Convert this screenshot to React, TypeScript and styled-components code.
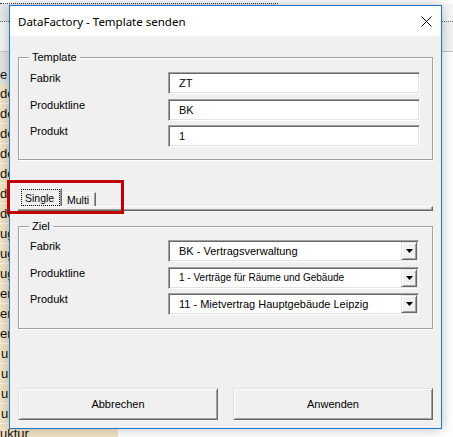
import React from "react";
import styled, { createGlobalStyle, css } from "styled-components";

const GlobalStyle = createGlobalStyle`
  html, body { margin: 0; padding: 0; background: #ffffff; }
  body { font-family: "Liberation Sans", Arial, sans-serif; overflow: hidden; }
  *, *::before, *::after { box-sizing: border-box; }
`;

const sunken = css`
  border: 1px solid;
  border-color: #a0a0a0 #ffffff #ffffff #a0a0a0;
  box-shadow: inset 1px 1px 0 #696969, inset -1px -1px 0 #e3e3e3;
`;

const raised = css`
  border: 1px solid;
  border-color: #e3e3e3 #696969 #696969 #e3e3e3;
  box-shadow: inset 1px 1px 0 #ffffff, inset -1px -1px 0 #a0a0a0;
`;

/* ---------- desktop / excel sheet behind ---------- */

const Desktop = styled.div`
  position: relative;
  width: 453px;
  height: 437px;
  overflow: hidden;
  background: #ffffff;
`;

const Sheet = styled.div`
  display: flex;
  flex-direction: column;
  width: 453px;
  height: 437px;
`;

const NameBoxStrip = styled.div`
  flex: none;
  height: 4px;
  width: 278px;
  border-bottom: 1px dotted #3a3a3a;
`;

const ToolStrip = styled.div`
  flex: none;
  height: 18px;
  background: linear-gradient(to right, #e8e8e8 0 278px, #f7f7f7 278px);
  border-bottom: 1px dotted #6a6a6a;
`;

const RibbonGap = styled.div`
  flex: none;
  height: 30px;
  background: #f4f4f4;
  border-bottom: 1px solid #c6c6c6;
`;

const SheetRow = styled.div<{ $tall?: boolean }>`
  flex: none;
  display: flex;
  height: ${(p) => (p.$tall ? 32 : 20)}px;
  background: #ffffff;
`;

const SheetCell = styled.div<{ $header?: boolean; $shift: number }>`
  width: 118px;
  overflow: hidden;
  white-space: nowrap;
  font-family: "Liberation Sans", Arial, sans-serif;
  font-size: 13px;
  color: #111;
  padding-left: ${(p) => p.$shift}px;
  ${(p) =>
    p.$header
      ? css`
          background: #e2e2e2;
          padding-top: 15px;
          line-height: 16px;
        `
      : css`
          background: #f2e4c5;
          border-bottom: 1px solid #fbf7ee;
          line-height: 19px;
        `}
`;

/* ---------- dialog window ---------- */

const Window = styled.div`
  position: absolute;
  left: 9px;
  top: 5px;
  width: 433px;
  height: 424px;
  border: 1px solid #1979ca;
  background: #f0f0f0;
  box-shadow: 0 0 12px rgba(0, 0, 0, 0.26);
  display: flex;
  flex-direction: column;
`;

const TitleBar = styled.div`
  flex: none;
  height: 30px;
  background: #ffffff;
  display: flex;
  align-items: center;
  justify-content: space-between;
  padding: 0 9px 0 8px;
`;

const Title = styled.span`
  font-family: "Noto Sans", "Open Sans", sans-serif;
  font-size: 11.5px;
  color: #000;
  padding-top: 1px;
`;

const CloseGlyph = styled.svg`
  display: block;
  width: 11px;
  height: 11px;
`;

const Body = styled.div`
  flex: 1;
  display: flex;
  flex-direction: column;
  padding: 15px 8px 8px 8px;
  font-family: "Liberation Sans", Arial, sans-serif;
  font-size: 11px;
  color: #000;
`;

const GroupBox = styled.fieldset<{ $pt: number; $pb: number }>`
  margin: 0;
  min-width: 0;
  padding: ${(p) => p.$pt}px 12px ${(p) => p.$pb}px 11px;
  border: 1px solid #a0a0a0;
  box-shadow: 1px 1px 0 #ffffff, inset 1px 1px 0 #ffffff;
`;

const Legend = styled.legend`
  margin-left: -1px;
  padding: 0 3px;
  font-size: 11px;
  line-height: 13px;
  background: #f0f0f0;
`;

const FieldGrid = styled.div`
  display: grid;
  grid-template-columns: 138px 252px;
  row-gap: 4.5px;
  align-items: start;
`;

const Label = styled.span`
  font-size: 11px;
  line-height: 13px;
`;

const TextBox = styled.div`
  ${sunken};
  height: 22px;
  background: #ffffff;
  display: flex;
  align-items: center;
  padding-left: 10px;
  font-size: 11px;
`;

const Combo = styled.div`
  ${sunken};
  height: 22px;
  width: 251px;
  background: #ffffff;
  display: flex;
  align-items: center;
  padding: 0 1px 0 10px;
`;

const ComboText = styled.span<{ $size: number }>`
  flex: 1;
  font-size: ${(p) => p.$size}px;
  white-space: nowrap;
  overflow: hidden;
`;

const DropButton = styled.span`
  ${raised};
  flex: none;
  width: 16px;
  height: 18px;
  background: #f0f0f0;
  display: flex;
  align-items: center;
  justify-content: center;
`;

const TabArea = styled.div`
  margin-top: 28px;
  display: flex;
  flex-direction: column;
`;

const TabRow = styled.div`
  display: flex;
  align-items: flex-end;
  height: 18px;
  padding-left: 2px;
`;

const Tab = styled.div<{ $active?: boolean; $w: number }>`
  width: ${(p) => p.$w}px;
  height: ${(p) => (p.$active ? 18 : 14)}px;
  border-top: 1px solid #ffffff;
  border-left: 1px solid #ffffff;
  border-right: 1px solid #696969;
  box-shadow: inset -1px 0 0 #a0a0a0;
  display: flex;
  align-items: stretch;
  font-size: 10.5px;
`;

const TabLabel = styled.span<{ $focus?: boolean }>`
  flex: 1;
  display: flex;
  align-items: center;
  padding-left: 3px;
  margin-right: 1px;
  border: 1px ${(p) => (p.$focus ? "dotted #000" : "solid transparent")};
`;

const TabBar = styled.div`
  height: 5px;
  border-top: 1px solid #ffffff;
  border-right: 1px solid #696969;
  border-bottom: 1px solid #696969;
  box-shadow: inset 0 -1px 0 #a0a0a0, inset -1px 0 0 #a0a0a0;
`;

const ZielWrap = styled.div`
  margin-top: 9px;
`;

const ButtonRow = styled.div`
  margin-top: auto;
  display: grid;
  grid-template-columns: 200px 200px;
  column-gap: 15px;
`;

const Button = styled.button`
  ${raised};
  height: 32px;
  background: #f0f0f0;
  font-family: "Liberation Sans", Arial, sans-serif;
  font-size: 11px;
  color: #000;
  padding: 0;
`;

const Annotation = styled.div`
  position: absolute;
  left: 7px;
  top: 180px;
  width: 117px;
  height: 34px;
  border: 3px solid #c00000;
`;

const sheetRows: { t: string; s: number }[] = [
  { t: "de", s: -1 },
  { t: "de", s: -1 },
  { t: "de", s: -1 },
  { t: "de", s: -1 },
  { t: "de", s: -1 },
  { t: "de", s: -1 },
  { t: "de", s: -1 },
  { t: "ug", s: -1 },
  { t: "ug", s: -1 },
  { t: "ug", s: -1 },
  { t: "er", s: -1 },
  { t: "er", s: -1 },
  { t: "er", s: -1 },
  { t: "u", s: 1 },
  { t: "u", s: 1 },
  { t: "u", s: 1 },
  { t: "u", s: 1 },
  { t: "uktur", s: 0 },
];

const Arrow = () => (
  <svg width="7" height="4" viewBox="0 0 7 4">
    <polygon points="0,0 7,0 3.5,4" fill="#000" />
  </svg>
);

export default function App() {
  return (
    <>
      <GlobalStyle />
      <Desktop>
        <Sheet>
          <NameBoxStrip />
          <ToolStrip />
          <RibbonGap />
          <SheetRow $tall>
            <SheetCell $header $shift={0}>
              e
            </SheetCell>
          </SheetRow>
          {sheetRows.map((r, i) => (
            <SheetRow key={i}>
              <SheetCell $shift={r.s}>{r.t}</SheetCell>
            </SheetRow>
          ))}
        </Sheet>

        <Window>
          <TitleBar>
            <Title>DataFactory - Template senden</Title>
            <CloseGlyph viewBox="0 0 11 11">
              <path d="M0.5 0.5 L10.5 10.5 M10.5 0.5 L0.5 10.5" stroke="#000" strokeWidth="1" />
            </CloseGlyph>
          </TitleBar>
          <Body>
            <GroupBox $pt={8} $pb={12}>
              <Legend>Template</Legend>
              <FieldGrid>
                <Label>Fabrik</Label>
                <TextBox>ZT</TextBox>
                <Label>Produktline</Label>
                <TextBox>BK</TextBox>
                <Label>Produkt</Label>
                <TextBox>1</TextBox>
              </FieldGrid>
            </GroupBox>

            <TabArea>
              <TabRow>
                <Tab $active $w={42}>
                  <TabLabel $focus>Single</TabLabel>
                </Tab>
                <Tab $w={34}>
                  <TabLabel>Multi</TabLabel>
                </Tab>
              </TabRow>
              <TabBar />
            </TabArea>

            <ZielWrap>
              <GroupBox $pt={7} $pb={13}>
                <Legend>Ziel</Legend>
                <FieldGrid>
                  <Label>Fabrik</Label>
                  <Combo>
                    <ComboText $size={11}>BK - Vertragsverwaltung</ComboText>
                    <DropButton>
                      <Arrow />
                    </DropButton>
                  </Combo>
                  <Label>Produktline</Label>
                  <Combo>
                    <ComboText $size={10}>1 - Verträge für Räume und Gebäude</ComboText>
                    <DropButton>
                      <Arrow />
                    </DropButton>
                  </Combo>
                  <Label>Produkt</Label>
                  <Combo>
                    <ComboText $size={11}>11 - Mietvertrag Hauptgebäude Leipzig</ComboText>
                    <DropButton>
                      <Arrow />
                    </DropButton>
                  </Combo>
                </FieldGrid>
              </GroupBox>
            </ZielWrap>

            <ButtonRow>
              <Button>Abbrechen</Button>
              <Button>Anwenden</Button>
            </ButtonRow>
          </Body>
        </Window>

        <Annotation />
      </Desktop>
    </>
  );
}
